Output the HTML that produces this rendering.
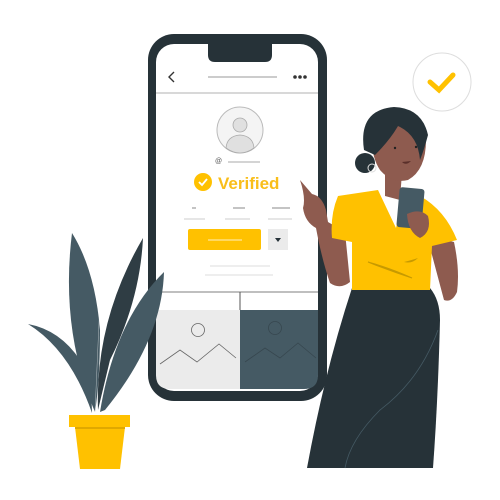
<!DOCTYPE html>
<html><head><meta charset="utf-8"><style>
html,body{margin:0;padding:0;background:#fff;}
svg{display:block}
</style></head><body>
<svg width="500" height="500" viewBox="0 0 500 500" xmlns="http://www.w3.org/2000/svg">
<!-- phone -->
<rect x="148" y="34" width="179" height="367" rx="26" fill="#263238"/>
<rect x="156" y="44" width="162" height="347" rx="18" fill="#fff"/>
<path d="M208 40 H272 V55 Q272 62 265 62 H215 Q208 62 208 55 Z" fill="#263238"/>
<line x1="156" y1="93" x2="318" y2="93" stroke="#ccc" stroke-width="1.5"/>
<path d="M174 72 L169 77 L174 82" fill="none" stroke="#333" stroke-width="1.4"/>
<line x1="208" y1="77" x2="277" y2="77" stroke="#999" stroke-width="1"/>
<circle cx="295" cy="77" r="1.8" fill="#333"/><circle cx="300" cy="77" r="1.8" fill="#333"/><circle cx="305" cy="77" r="1.8" fill="#333"/>
<circle cx="240" cy="130" r="23" fill="#f4f4f4" stroke="#bbb" stroke-width="1"/>
<circle cx="240" cy="125" r="7" fill="#e0e0e0" stroke="#aaa" stroke-width="0.8"/>
<path d="M226 148 Q227 136 240 135 Q253 136 254 148 Q247 153 240 153 Q233 153 226 148Z" fill="#e0e0e0" stroke="#aaa" stroke-width="0.8"/>
<text x="215" y="163" font-family="Liberation Sans, sans-serif" font-size="7" fill="#555">@</text>
<line x1="228" y1="162" x2="260" y2="162" stroke="#aaa" stroke-width="1"/>
<circle cx="203" cy="182" r="9" fill="#FFC100"/>
<path d="M199 182 L202 185 L207 179" fill="none" stroke="#fff" stroke-width="1.8"/>
<text x="218" y="189" font-family="Liberation Sans, sans-serif" font-weight="bold" font-size="17" fill="#F9BE1A">Verified</text>
<g stroke="#888" stroke-width="1"><line x1="192" y1="208" x2="196" y2="208"/><line x1="233" y1="208" x2="245" y2="208"/><line x1="272" y1="208" x2="290" y2="208"/>
<line x1="184" y1="219" x2="205" y2="219" stroke="#ccc"/><line x1="225" y1="219" x2="250" y2="219" stroke="#ccc"/><line x1="268" y1="219" x2="292" y2="219" stroke="#ccc"/></g>
<rect x="188" y="229" width="73" height="21" rx="2" fill="#FFC100"/>
<line x1="208" y1="240" x2="242" y2="240" stroke="#fff" stroke-width="0.8"/>
<rect x="268" y="229" width="20" height="21" fill="#ebebeb"/>
<path d="M275 238 L281 238 L278 242Z" fill="#263238"/>
<line x1="210" y1="266" x2="270" y2="266" stroke="#ddd"/><line x1="205" y1="275" x2="273" y2="275" stroke="#ddd"/>
<line x1="156" y1="292" x2="318" y2="292" stroke="#999" stroke-width="1.2"/>
<line x1="240" y1="292" x2="240" y2="310" stroke="#555" stroke-width="1"/>
<path d="M156 310 H240 V389 H170 Q156 389 156 375Z" fill="#ebebeb"/>
<path d="M240 310 H318 V375 Q318 389 304 389 H240Z" fill="#455A64"/>
<circle cx="198" cy="330" r="6.5" fill="none" stroke="#666" stroke-width="0.8"/>
<path d="M160 364 L180 350 L197 362 L219 344 L236 358" fill="none" stroke="#666" stroke-width="0.8"/>
<circle cx="275" cy="328" r="6.5" fill="none" stroke="#37474F" stroke-width="0.8"/>
<path d="M245 362 L265 348 L280 358 L298 343 L316 358" fill="none" stroke="#37474F" stroke-width="0.8"/>
<!-- plant -->
<g>
<path d="M95 412 Q60 330 72 233 Q95 270 100 330 Q100 380 95 412Z" fill="#455A64"/>
<path d="M98 410 Q95 320 143 238 Q140 300 110 360Z" fill="#2f3d44"/>
<path d="M100 412 Q115 320 164 272 Q162 340 105 410Z" fill="#455A64"/>
<path d="M92 413 Q70 350 28 324 Q60 330 80 360 Q92 385 92 413Z" fill="#455A64"/>
<line x1="95" y1="412" x2="100" y2="300" stroke="#fff" stroke-width="0.5" opacity="0.6"/>
</g>
<path d="M75 427 H125 L120 469 H80Z" fill="#FFC100"/>
<rect x="69" y="415" width="61" height="12" fill="#FFC100"/>
<rect x="75" y="427" width="50" height="2" fill="#e0a800"/>
<!-- badge -->
<circle cx="442" cy="82" r="29" fill="#fff" stroke="#ddd" stroke-width="1"/>
<path d="M430 82 L439 90 L453 75" fill="none" stroke="#FFC100" stroke-width="5" stroke-linecap="round"/>
<!-- woman -->
<path d="M352 288 H430 Q440 300 440 320 Q438 400 433 468 H307 Q325 370 352 288Z" fill="#263238"/>
<path d="M438 330 Q420 380 380 410 Q350 440 345 468" fill="none" stroke="#455A64" stroke-width="0.8"/>
<!-- pointing arm -->
<path d="M300 180 L312 194 Q322 196 326 210 L328 222 L345 232 L350 282 Q340 290 330 283 Q322 260 316 228 Q305 222 303 208 Q306 198 300 180Z" fill="#8E5B4F"/>
<!-- right arm -->
<path d="M438 238 L454 242 Q460 270 457 292 Q452 303 444 300 Q436 270 428 240Z" fill="#8E5B4F"/>
<!-- neck -->
<path d="M385 170 L402 172 L400 200 L385 196Z" fill="#8E5B4F"/>
<!-- shirt -->
<path d="M338 196 L378 190 L396 228 L404 192 L420 196 Q445 210 457 240 L432 246 L430 290 L352 290 L352 242 L332 238 Q330 215 338 196Z" fill="#FFC100"/>
<path d="M368 262 Q390 268 412 278 Q390 271 368 262Z" fill="#c79a00" stroke="#c79a00"/>
<path d="M404 262 Q412 260 418 258 Q412 264 404 262Z" fill="#c79a00"/>
<!-- held phone -->
<rect x="398" y="188" width="25" height="40" rx="3" fill="#455A64" transform="rotate(5 410 208)"/>
<path d="M407 214 Q420 208 428 216 Q432 232 420 238 Q408 232 407 214Z" fill="#8E5B4F"/>
<!-- head -->
<path d="M372 140 Q372 112 398 112 Q424 116 426 140 Q426 170 408 180 Q392 184 380 170 Q372 158 372 140Z" fill="#8E5B4F"/>
<path d="M364 150 Q358 110 394 107 Q422 108 428 135 Q424 150 420 160 Q418 135 398 126 Q390 140 375 155Z" fill="#263238"/>
<circle cx="365" cy="163" r="10" fill="#263238"/>
<circle cx="372" cy="168" r="4" fill="none" stroke="#ddd" stroke-width="1"/>
<circle cx="395" cy="148" r="1.2" fill="#222"/><circle cx="416" cy="147" r="1.2" fill="#222"/>
<path d="M402 162 Q406 166 411 161" fill="#5a2f2a"/>
</svg>
</body></html>
